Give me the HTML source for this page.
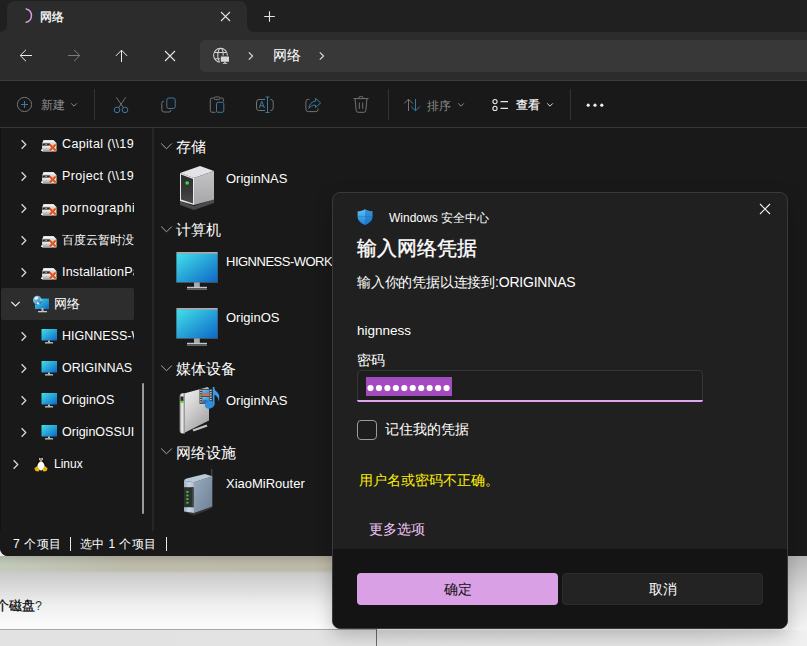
<!DOCTYPE html>
<html><head><meta charset="utf-8">
<style>
*{box-sizing:border-box;margin:0;padding:0}
html,body{width:807px;height:646px;overflow:hidden}
body{position:relative;font-family:"Liberation Sans",sans-serif;background:#e9e9e9;color:#fff}
.a{position:absolute}
.t{position:absolute;white-space:nowrap;line-height:1}
#bg{left:0;top:556px;width:807px;height:90px;background:linear-gradient(#c2c2c2,#c9c9c9 16px,#f0f0f0 50px,#fbfbfb 70px)}
#band{left:0;top:556px;width:788px;height:17px;background:linear-gradient(rgba(0,0,0,0.12),rgba(0,0,0,0) 9px,rgba(255,255,255,0) 14px,rgba(207,207,207,0.6) 17px),linear-gradient(90deg,#c3cabb,#bdbcab 120px,#bdb9a8 300px,#c0bdae)}
#bline{left:0;top:629px;width:377px;height:1px;background:#a8a8a8}
#below{left:0;top:630px;width:807px;height:16px;background:linear-gradient(90deg,#e2e2e2,#e4e4e4 700px,#f0f0f0 807px)}
#vline{left:376px;top:629px;width:1px;height:17px;background:#6a6a6a}
#rgrad{left:788px;top:556px;width:19px;height:74px;background:linear-gradient(#b5b5b5,#e0e0e0 40px,#f4f4f4 74px)}
#win{left:0;top:0;width:807px;height:556px;background:#191919;border-bottom-left-radius:8px;overflow:hidden}
#tabs{left:0;top:0;width:807px;height:32px;background:#2c2c2c}
#tab{left:7px;top:1px;width:240px;height:31px;background:#2c2c2c;border-radius:8px 8px 0 0}
#navbar{left:0;top:32px;width:807px;height:48px;background:#2c2c2c}
#addr{left:200px;top:40px;width:620px;height:32px;background:#383838;border-radius:5px}
#line1{left:0;top:80px;width:807px;height:1px;background:#3d3d3d}
#cmd{left:0;top:81px;width:807px;height:46px;background:#191919}
#line2{left:0;top:127px;width:807px;height:1px;background:#363636}
#navdiv{left:152px;top:128px;width:2px;height:403px;background:#262626}
#status{left:0;top:531px;width:807px;height:25px;background:#191919}
</style></head><body>
<svg width="0" height="0" style="position:absolute">
<defs>
<linearGradient id="scr" x1="0" y1="0" x2="1" y2="1"><stop offset="0" stop-color="#40e0ea"/><stop offset="1" stop-color="#0e66c6"/></linearGradient>
<linearGradient id="drv" x1="0" y1="0" x2="0" y2="1"><stop offset="0" stop-color="#f2f2f2"/><stop offset="1" stop-color="#9a9a9a"/></linearGradient>
<linearGradient id="glb" x1="0" y1="0" x2="1" y2="1"><stop offset="0" stop-color="#a8dcf5"/><stop offset="1" stop-color="#1f78b8"/></linearGradient>
<symbol id="ndrive" viewBox="0 0 18 14">
 <path d="M3.5 1.2H13.5L16.5 4V12.6H2.2V4Z" fill="#d8d8d8"/>
 <path d="M3.5 1.2H13.5L15.5 3.3H2.8Z" fill="#f4f4f4"/>
 <rect x="2.4" y="4.4" width="7.5" height="2.2" fill="#2a2a2a"/>
 <rect x="5.5" y="5" width="1.2" height="0.9" fill="#ddd"/>
 <rect x="2.4" y="7" width="9" height="5.6" fill="url(#drv)"/>
 <rect x="1" y="10.4" width="2" height="1.6" fill="#e8e8e8"/>
 <path d="M9.8 5.6L15.6 11.6M15.6 5.6L9.8 11.6" stroke="#fff" stroke-width="3.4" opacity="0.35"/>
 <path d="M9.8 5.6L15.6 11.6M15.6 5.6L9.8 11.6" stroke="#e4541d" stroke-width="2.2"/>
</symbol>
<symbol id="smon" viewBox="0 0 16 16">
 <rect x="0.5" y="1" width="15.5" height="11.5" fill="url(#scr)"/>
 <rect x="7" y="12.5" width="2" height="2" fill="#b8b8b8"/>
 <rect x="4" y="14.2" width="8" height="1.3" fill="#c8c8c8"/>
</symbol>
<symbol id="bmon" viewBox="0 0 42 38">
 <rect x="0" y="0" width="42" height="31" fill="#4a4a4a"/>
 <rect x="0.6" y="0.1" width="40.9" height="1.7" fill="#b6b8bf"/>
 <rect x="0.6" y="1.8" width="40.9" height="28.4" fill="url(#scr)"/>
 <rect x="18" y="30.4" width="5.8" height="4.8" fill="#a4abb0"/>
 <rect x="11" y="34.8" width="20" height="1.3" fill="#c4c8cc"/>
 <rect x="11" y="36.1" width="20" height="1.9" fill="#5e6368"/>
</symbol>
</defs></svg>
<div class="a" id="bg"></div>
<div class="a" id="band"></div>
<div class="a" id="bline"></div>
<div class="a" id="below"></div>
<div class="a" id="vline"></div>
<div class="a" id="rgrad"></div>
<div class="t" style="left:-4px;top:600px;font-size:12.5px;color:#000;-webkit-text-stroke:0.25px #000">个磁盘<span style="-webkit-text-stroke:0;color:#333">?</span></div>

<div class="a" id="win">
  <div class="a" id="tabs"></div>
  <div class="a" style="left:0;top:0;width:7px;height:32px;background:#202020;border-bottom-right-radius:7px"></div>
  <div class="a" style="left:247px;top:0;width:560px;height:32px;background:#202020;border-bottom-left-radius:8px"></div>
  <div class="a" style="left:7px;top:0;width:240px;height:10px;background:#202020"></div>
  <div class="a" id="tab"></div>
  <div class="a" id="navbar"></div>
  <div class="a" id="addr"></div>

  <svg class="a" style="left:17px;top:6px" width="20" height="20" viewBox="0 0 20 20"><path d="M9.2 2.9 A6.9 6.9 0 0 1 9.2 16.3" fill="none" stroke="#d99be6" stroke-width="1.5" stroke-linecap="round"/></svg>
  <div class="t" style="left:40px;top:11px;font-size:12.3px;color:#fff;-webkit-text-stroke:0.3px #fff">网络</div>
  <svg class="a" style="left:220px;top:11px" width="11" height="11" viewBox="0 0 11 11"><path d="M1 1L10 10M10 1L1 10" stroke="#e0e0e0" stroke-width="1.1"/></svg>
  <svg class="a" style="left:263px;top:10px" width="13" height="13" viewBox="0 0 13 13"><path d="M6.5 1.2V11.8M1.2 6.5H11.8" stroke="#e6e6e6" stroke-width="1.1"/></svg>
  <svg class="a" style="left:18px;top:48px" width="16" height="16" viewBox="0 0 16 16"><path d="M2.3 7.5H14M7.9 1.9L2.2 7.5L7.9 13.2" fill="none" stroke="#ececec" stroke-width="1"/></svg>
  <svg class="a" style="left:66px;top:48px" width="16" height="16" viewBox="0 0 16 16"><path d="M2 7.5H13.7M8.1 1.9L13.8 7.5L8.1 13.2" fill="none" stroke="#7c7c7c" stroke-width="1"/></svg>
  <svg class="a" style="left:114px;top:48px" width="16" height="16" viewBox="0 0 16 16"><path d="M7.5 2.2V14M1.9 7.9L7.5 2.2L13.1 7.9" fill="none" stroke="#ececec" stroke-width="1"/></svg>
  <svg class="a" style="left:164px;top:50px" width="12" height="12" viewBox="0 0 12 12"><path d="M1 1L11 11M11 1L1 11" stroke="#e6e6e6" stroke-width="1.1"/></svg>
  <svg class="a" style="left:212px;top:47px" width="20" height="20" viewBox="0 0 20 20"><g fill="none" stroke="#d4d4d4" stroke-width="1.05"><circle cx="8.5" cy="8.2" r="6.9"/><ellipse cx="8.5" cy="8.2" rx="2.7" ry="6.9"/><path d="M2.4 5.4H14.6M2.4 11.7H14.6"/></g><rect x="7.8" y="8.6" width="10.2" height="9" fill="#383838"/><rect x="8.8" y="9.6" width="8.2" height="5.1" rx="0.5" fill="#d8d8d8"/><rect x="12.3" y="14.5" width="1.4" height="1.6" fill="#d8d8d8"/><rect x="10.7" y="15.9" width="4.6" height="0.9" rx="0.4" fill="#d8d8d8"/></svg>
  <svg class="a" style="left:247px;top:51px" width="8" height="10" viewBox="0 0 8 10"><path d="M1.8 1.3L5.6 5L1.8 8.7" fill="none" stroke="#e0e0e0" stroke-width="1.1"/></svg>
  <div class="t" style="left:273px;top:48px;font-size:14px;color:#fff">网络</div>
  <svg class="a" style="left:318px;top:51px" width="8" height="10" viewBox="0 0 8 10"><path d="M1.8 1.3L5.6 5L1.8 8.7" fill="none" stroke="#e0e0e0" stroke-width="1.1"/></svg>
  <div class="a" id="line1"></div>
  <div class="a" id="cmd"></div>

  <svg class="a" style="left:16px;top:96px" width="17" height="17" viewBox="0 0 17 17"><circle cx="8.5" cy="8.5" r="7.1" fill="none" stroke="#767676" stroke-width="1"/><path d="M8.5 5V12M5 8.5H12" stroke="#3b7aa0" stroke-width="1.1"/></svg>
  <div class="t" style="left:41px;top:99px;font-size:12px;color:#8c8c8c">新建</div>
  <svg class="a" style="left:70px;top:101px" width="8" height="8" viewBox="0 0 8 8"><path d="M1.2 2.4L4 5.2L6.8 2.4" fill="none" stroke="#8c8c8c" stroke-width="1"/></svg>
  <div class="a" style="left:94px;top:89px;width:1px;height:31px;background:#333"></div>
  <svg class="a" style="left:112px;top:95px" width="18" height="19" viewBox="0 0 18 19"><g fill="none" stroke-width="1"><path d="M4.3 2.3L11.3 12.6M13.7 2.3L6.7 12.6" stroke="#727272"/><circle cx="5" cy="14.9" r="2.8" stroke="#3b7aa0"/><circle cx="13" cy="14.9" r="2.8" stroke="#3b7aa0"/></g></svg>
  <svg class="a" style="left:160px;top:96px" width="18" height="18" viewBox="0 0 18 18"><g fill="none" stroke-width="1"><path d="M4 5.2H3.8A2 2 0 0 0 1.8 7.2V13.8A2.2 2.2 0 0 0 4 16H9A2 2 0 0 0 11 14" stroke="#727272"/><rect x="6.8" y="2" width="8.4" height="10.5" rx="2" stroke="#3b7aa0"/></g></svg>
  <svg class="a" style="left:208px;top:95px" width="18" height="19" viewBox="0 0 18 19"><g fill="none" stroke-width="1"><path d="M5.5 3H4A1.8 1.8 0 0 0 2.3 4.8V15.5A1.8 1.8 0 0 0 4 17.3H7.5M12.5 3H14A1.6 1.6 0 0 1 15.5 4.6V6.5M6 3.3A1.3 1.3 0 0 1 7.3 2H10.7A1.3 1.3 0 0 1 12 3.3A1.3 1.3 0 0 1 10.7 4.6H7.3A1.3 1.3 0 0 1 6 3.3Z" stroke="#727272"/><rect x="8.5" y="7.3" width="7.3" height="10" rx="1.5" stroke="#3b7aa0"/></g></svg>
  <svg class="a" style="left:255px;top:95px" width="20" height="19" viewBox="0 0 20 19"><g fill="none" stroke-width="1"><path d="M10 4.5H4A2.5 2.5 0 0 0 1.5 7V13A2.5 2.5 0 0 0 4 15.5H10M15 4.5H15.7A2.5 2.5 0 0 1 18.2 7V13A2.5 2.5 0 0 1 15.7 15.5H15" stroke="#727272"/><path d="M4.2 13L6.8 6.3L9.4 13M5.1 10.8H8.5M12.5 2V17.5M10.5 2H14.5M10.5 17.5H14.5" stroke="#3b7aa0"/></g></svg>
  <svg class="a" style="left:304px;top:96px" width="18" height="18" viewBox="0 0 18 18"><g fill="none" stroke-width="1"><path d="M5.5 3.3H4.2A2.3 2.3 0 0 0 1.9 5.6V13.3A2.3 2.3 0 0 0 4.2 15.6H11.8A2.3 2.3 0 0 0 14.1 13.3V12.4" stroke="#727272"/><path d="M11.5 2.3L16.7 6.9L11.5 11.6V9.2C8.5 9 6.5 10.2 4.8 12.3C5.2 8.7 7.3 5.8 11.5 5.1Z" stroke="#3b7aa0" stroke-linejoin="round"/></g></svg>
  <svg class="a" style="left:352px;top:95px" width="18" height="19" viewBox="0 0 18 19"><g fill="none" stroke="#727272" stroke-width="1"><path d="M1.5 3.6H16.5M6.8 3.6V2.8A1.5 1.5 0 0 1 8.3 1.5H9.7A1.5 1.5 0 0 1 11.2 2.8V3.6M3 3.6L4.2 15.5A2 2 0 0 0 6.2 17.3H11.8A2 2 0 0 0 13.8 15.5L15 3.6M7.3 7.5V13.8M10.7 7.5V13.8"/></g></svg>
  <div class="a" style="left:388px;top:89px;width:1px;height:31px;background:#333"></div>
  <svg class="a" style="left:402px;top:97px" width="20" height="16" viewBox="0 0 20 16"><g fill="none" stroke-width="1"><path d="M6.5 14V2.2M2.2 6.5L6.5 2.2L10.8 6.5" stroke="#767676"/><path d="M13.5 2V13.8M9.2 9.5L13.5 13.8L17.8 9.5" stroke="#3b7aa0"/></g></svg>
  <div class="t" style="left:427px;top:100px;font-size:12px;color:#8c8c8c">排序</div>
  <svg class="a" style="left:457px;top:101px" width="8" height="8" viewBox="0 0 8 8"><path d="M1.2 2.4L4 5.2L6.8 2.4" fill="none" stroke="#8c8c8c" stroke-width="1"/></svg>
  <svg class="a" style="left:491px;top:97px" width="19" height="16" viewBox="0 0 19 16"><g fill="none" stroke="#e8e8e8" stroke-width="1.1"><circle cx="4" cy="4.6" r="2.1"/><circle cx="4" cy="11.4" r="2.1"/><path d="M9.5 4.6H17M9.5 11.4H17"/></g></svg>
  <div class="t" style="left:516px;top:99px;font-size:12px;color:#fff;-webkit-text-stroke:0.2px #fff">查看</div>
  <svg class="a" style="left:546px;top:101px" width="8" height="8" viewBox="0 0 8 8"><path d="M1.2 2.4L4 5.2L6.8 2.4" fill="none" stroke="#e0e0e0" stroke-width="1"/></svg>
  <div class="a" style="left:570px;top:89px;width:1px;height:31px;background:#333"></div>
  <svg class="a" style="left:585px;top:102px" width="20" height="6" viewBox="0 0 20 6"><g fill="#f0f0f0"><circle cx="3.2" cy="3.2" r="1.6"/><circle cx="10" cy="3.2" r="1.6"/><circle cx="16.8" cy="3.2" r="1.6"/></g></svg>
  <div class="a" id="line2"></div>
  <div class="a" style="left:0;top:128px;width:152px;height:403px;overflow:hidden">
  <div class="a" style="left:1px;top:160px;width:133px;height:32px;background:#2d2d2d;border-radius:2px"></div>
  <svg class="a" style="left:20px;top:11px" width="8" height="11" viewBox="0 0 8 11"><path d="M1.6 1.2L5.8 5.5L1.6 9.8" fill="none" stroke="#dadada" stroke-width="1.25"/></svg>
  <svg class="a" style="left:40px;top:11px" width="18" height="14"><use href="#ndrive"/></svg>
  <div class="t" style="left:62px;top:10px;font-size:12.5px;letter-spacing:0.35px;color:#fff;width:72px;overflow:hidden">Capital (\\192.168</div>
  <svg class="a" style="left:20px;top:43px" width="8" height="11" viewBox="0 0 8 11"><path d="M1.6 1.2L5.8 5.5L1.6 9.8" fill="none" stroke="#dadada" stroke-width="1.25"/></svg>
  <svg class="a" style="left:40px;top:43px" width="18" height="14"><use href="#ndrive"/></svg>
  <div class="t" style="left:62px;top:42px;font-size:12.5px;letter-spacing:0.35px;color:#fff;width:72px;overflow:hidden">Project (\\192.168</div>
  <svg class="a" style="left:20px;top:75px" width="8" height="11" viewBox="0 0 8 11"><path d="M1.6 1.2L5.8 5.5L1.6 9.8" fill="none" stroke="#dadada" stroke-width="1.25"/></svg>
  <svg class="a" style="left:40px;top:75px" width="18" height="14"><use href="#ndrive"/></svg>
  <div class="t" style="left:62px;top:74px;font-size:12.5px;letter-spacing:0.6px;color:#fff;width:72px;overflow:hidden">pornographic</div>
  <svg class="a" style="left:20px;top:107px" width="8" height="11" viewBox="0 0 8 11"><path d="M1.6 1.2L5.8 5.5L1.6 9.8" fill="none" stroke="#dadada" stroke-width="1.25"/></svg>
  <svg class="a" style="left:40px;top:107px" width="18" height="14"><use href="#ndrive"/></svg>
  <div class="t" style="left:62px;top:106px;font-size:12px;color:#fff;width:72px;overflow:hidden">百度云暂时没</div>
  <svg class="a" style="left:20px;top:139px" width="8" height="11" viewBox="0 0 8 11"><path d="M1.6 1.2L5.8 5.5L1.6 9.8" fill="none" stroke="#dadada" stroke-width="1.25"/></svg>
  <svg class="a" style="left:40px;top:139px" width="18" height="14"><use href="#ndrive"/></svg>
  <div class="t" style="left:62px;top:138px;font-size:12.5px;letter-spacing:0.2px;color:#fff;width:72px;overflow:hidden">InstallationPack</div>
  <svg class="a" style="left:10px;top:172px" width="11" height="8" viewBox="0 0 11 8"><path d="M1.3 1.8L5.5 6L9.7 1.8" fill="none" stroke="#f0f0f0" stroke-width="1.2"/></svg>
  <svg class="a" style="left:33px;top:164px" width="17" height="17" viewBox="0 0 17 17"><rect x="2" y="6.6" width="14" height="10.4" fill="url(#scr)"/><circle cx="4.4" cy="8.3" r="4.6" fill="#1d1d1d" opacity="0.5"/><circle cx="4.4" cy="8.2" r="4.4" fill="url(#glb)"/><path d="M1.5 6.2Q2.8 4.4 4.6 4.8L5.4 6.4L3.6 7.6L2 7.4Z" fill="#eaf6fb"/><path d="M3.2 10.2L5.6 10.6L6.6 12.4L4.6 12.4Z" fill="#eaf6fb"/><path d="M7.4 6.4L8.6 7.6L8.4 9.2L7.6 8.6Z" fill="#eaf6fb"/></svg>
  <svg class="a" style="left:38px;top:180px" width="9" height="5" viewBox="0 0 9 5"><rect x="3.5" y="0" width="2" height="3" fill="#b8b8b8"/><rect x="0" y="3" width="9" height="1.3" fill="#c8c8c8"/></svg>
  <div class="t" style="left:54px;top:170px;font-size:12.5px;color:#fff;width:80px;overflow:hidden">网络</div>
  <svg class="a" style="left:20px;top:203px" width="8" height="11" viewBox="0 0 8 11"><path d="M1.6 1.2L5.8 5.5L1.6 9.8" fill="none" stroke="#dadada" stroke-width="1.25"/></svg>
  <svg class="a" style="left:41px;top:200px" width="16" height="16"><use href="#smon"/></svg>
  <div class="t" style="left:62px;top:202px;font-size:12.5px;letter-spacing:0px;color:#fff;width:72px;overflow:hidden">HIGNNESS-WORK</div>
  <svg class="a" style="left:20px;top:235px" width="8" height="11" viewBox="0 0 8 11"><path d="M1.6 1.2L5.8 5.5L1.6 9.8" fill="none" stroke="#dadada" stroke-width="1.25"/></svg>
  <svg class="a" style="left:41px;top:232px" width="16" height="16"><use href="#smon"/></svg>
  <div class="t" style="left:62px;top:234px;font-size:12.5px;letter-spacing:0px;color:#fff;width:72px;overflow:hidden">ORIGINNAS</div>
  <svg class="a" style="left:20px;top:267px" width="8" height="11" viewBox="0 0 8 11"><path d="M1.6 1.2L5.8 5.5L1.6 9.8" fill="none" stroke="#dadada" stroke-width="1.25"/></svg>
  <svg class="a" style="left:41px;top:264px" width="16" height="16"><use href="#smon"/></svg>
  <div class="t" style="left:62px;top:266px;font-size:12.5px;letter-spacing:0.12px;color:#fff;width:72px;overflow:hidden">OriginOS</div>
  <svg class="a" style="left:20px;top:299px" width="8" height="11" viewBox="0 0 8 11"><path d="M1.6 1.2L5.8 5.5L1.6 9.8" fill="none" stroke="#dadada" stroke-width="1.25"/></svg>
  <svg class="a" style="left:41px;top:296px" width="16" height="16"><use href="#smon"/></svg>
  <div class="t" style="left:62px;top:298px;font-size:12.5px;letter-spacing:0px;color:#fff;width:72px;overflow:hidden">OriginOSSUITE</div>
  <svg class="a" style="left:12px;top:331px" width="8" height="11" viewBox="0 0 8 11"><path d="M1.6 1.2L5.8 5.5L1.6 9.8" fill="none" stroke="#dadada" stroke-width="1.25"/></svg>
  <svg class="a" style="left:34px;top:327px" width="14" height="17" viewBox="0 0 14 17"><path d="M7 1C5.4 1 4.7 2.2 4.7 4C4.7 5.3 4 6.2 3 7.6C1.9 9.2 1.5 10.8 1.9 13L12.1 13C12.5 10.8 12.1 9.2 11 7.6C10 6.2 9.3 5.3 9.3 4C9.3 2.2 8.6 1 7 1Z" fill="#0c0c0c"/><path d="M7 6.4C5 6.4 3.3 9 3.3 11.8C3.3 14 4.8 15.4 7 15.4C9.2 15.4 10.7 14 10.7 11.8C10.7 9 9 6.4 7 6.4Z" fill="#fff"/><ellipse cx="5.9" cy="3.9" rx="0.9" ry="1.1" fill="#d8d8d8"/><ellipse cx="8.1" cy="3.9" rx="0.9" ry="1.1" fill="#d8d8d8"/><path d="M5.2 5.5Q7 4.6 8.8 5.5L7 7Z" fill="#eab400"/><path d="M0.4 13.2L2.8 11.2L5.6 14.3L4.8 16.4L1.4 16Z" fill="#eab400"/><path d="M13.6 13.2L11.2 11.2L8.4 14.3L9.2 16.4L12.6 16Z" fill="#eab400"/></svg>
  <div class="t" style="left:54px;top:330px;font-size:12px;letter-spacing:0px;color:#fff;width:80px;overflow:hidden">Linux</div>
  <div class="a" style="left:142px;top:255px;width:2px;height:131px;background:#9a9a9a;border-radius:1px"></div>
  </div>
  <div class="a" id="navdiv"></div>
  <div class="a" style="left:0;top:128px;width:1px;height:403px;background:#121212"></div>
  <div class="a" id="status"></div>
  <svg class="a" style="left:160px;top:141px" width="13" height="10" viewBox="0 0 13 10"><path d="M1.2 2.5L6.5 7.8L11.8 2.5" fill="none" stroke="#a8a8a8" stroke-width="1"/></svg>
  <div class="t" style="left:176px;top:139px;font-size:15px;color:#fff">存储</div>
  <svg class="a" style="left:160px;top:224px" width="13" height="10" viewBox="0 0 13 10"><path d="M1.2 2.5L6.5 7.8L11.8 2.5" fill="none" stroke="#a8a8a8" stroke-width="1"/></svg>
  <div class="t" style="left:176px;top:222px;font-size:15px;color:#fff">计算机</div>
  <svg class="a" style="left:160px;top:363px" width="13" height="10" viewBox="0 0 13 10"><path d="M1.2 2.5L6.5 7.8L11.8 2.5" fill="none" stroke="#a8a8a8" stroke-width="1"/></svg>
  <div class="t" style="left:176px;top:361px;font-size:15px;color:#fff">媒体设备</div>
  <svg class="a" style="left:160px;top:446px" width="13" height="10" viewBox="0 0 13 10"><path d="M1.2 2.5L6.5 7.8L11.8 2.5" fill="none" stroke="#a8a8a8" stroke-width="1"/></svg>
  <div class="t" style="left:176px;top:445px;font-size:15px;color:#fff">网络设施</div>

  <svg class="a" style="left:176px;top:164px" width="42" height="50" viewBox="176 164 42 50">
   <defs><linearGradient id="nasr" x1="0" y1="0" x2="0" y2="1"><stop offset="0" stop-color="#c4c4c6"/><stop offset="1" stop-color="#a6a6a8"/></linearGradient>
   <linearGradient id="nasf" x1="0" y1="0" x2="0" y2="1"><stop offset="0" stop-color="#2c2c2c"/><stop offset="0.6" stop-color="#3a3a3a"/><stop offset="1" stop-color="#4a4a4a"/></linearGradient></defs>
   <path d="M180 201L194 206L214 199L214 203L194 210L180 205Z" fill="#4a4a4a"/>
   <path d="M180 173L200 166L214 171L194 178Z" fill="#e4e4e8"/>
   <path d="M194 178L214 171L214 199.5L194 205Z" fill="url(#nasr)"/>
   <path d="M180 173L194 178L194 205L180 201Z" fill="#e8e8e8"/>
   <path d="M181 174.5L193 179V203.5L181 199.5Z" fill="url(#nasf)"/>
   <circle cx="187.2" cy="183" r="1.8" fill="#2fe23a"/>
  </svg>
  <div class="t" style="left:226px;top:172px;font-size:13px;color:#fff">OriginNAS</div>

  <svg class="a" style="left:176px;top:252px" width="42" height="38"><use href="#bmon"/></svg>
  <div class="t" style="left:226px;top:255px;font-size:13px;letter-spacing:-0.5px;color:#fff">HIGNNESS-WORKSTATION</div>
  <svg class="a" style="left:176px;top:308px" width="42" height="38"><use href="#bmon"/></svg>
  <div class="t" style="left:226px;top:311px;font-size:13px;color:#fff">OriginOS</div>

  <svg class="a" style="left:176px;top:384px" width="46" height="52" viewBox="176 384 46 52">
   <defs><linearGradient id="mdside" x1="0" y1="0" x2="0.6" y2="1"><stop offset="0" stop-color="#f2f2f2"/><stop offset="0.5" stop-color="#d0d0d0"/><stop offset="1" stop-color="#a6a6a6"/></linearGradient>
   <linearGradient id="mdfront" x1="0" y1="0" x2="1" y2="0"><stop offset="0" stop-color="#7a7a7a"/><stop offset="0.45" stop-color="#f8f8f8"/><stop offset="1" stop-color="#8a8a8a"/></linearGradient>
   <linearGradient id="film" x1="0" y1="0" x2="1" y2="1"><stop offset="0" stop-color="#6cc6f0"/><stop offset="1" stop-color="#2a7cc8"/></linearGradient></defs>
   <path d="M192.5 429.5L206.5 424.5L207.5 426.5L193.5 431.5Z" fill="#c4c4c4"/>
   <path d="M184 393.5L207 387.2Q209 386.8 209 389V420.5L185 432.5Z" fill="url(#mdside)"/>
   <path d="M179.5 397Q179.5 393.5 183 393.2L185 393V433.5L183 433.5Q179.5 433.5 179.5 430Z" fill="url(#mdfront)"/>
   <rect x="180.5" y="396.5" width="3" height="5" fill="#2a2a2a"/>
   <rect x="180.5" y="400.8" width="3" height="2.2" fill="#5fe03a"/>
   <rect x="199.5" y="388.8" width="12.5" height="15" fill="#3a3a3a"/>
   <rect x="200.3" y="389.8" width="1.3" height="1.2" fill="#f0f0f0"/><rect x="210.2" y="389.8" width="1.3" height="1.2" fill="#f0f0f0"/><rect x="200.3" y="392.1" width="1.3" height="1.2" fill="#f0f0f0"/><rect x="210.2" y="392.1" width="1.3" height="1.2" fill="#f0f0f0"/><rect x="200.3" y="394.4" width="1.3" height="1.2" fill="#f0f0f0"/><rect x="210.2" y="394.4" width="1.3" height="1.2" fill="#f0f0f0"/><rect x="200.3" y="396.7" width="1.3" height="1.2" fill="#f0f0f0"/><rect x="210.2" y="396.7" width="1.3" height="1.2" fill="#f0f0f0"/><rect x="200.3" y="399.0" width="1.3" height="1.2" fill="#f0f0f0"/><rect x="210.2" y="399.0" width="1.3" height="1.2" fill="#f0f0f0"/><rect x="200.3" y="401.3" width="1.3" height="1.2" fill="#f0f0f0"/><rect x="210.2" y="401.3" width="1.3" height="1.2" fill="#f0f0f0"/>
   <rect x="202.3" y="389.8" width="7.2" height="6.2" fill="url(#film)"/>
   <rect x="202.3" y="396.8" width="7.2" height="6.2" fill="url(#film)"/>
   <path d="M202.3 394L205 392.5L207 394.5L209.5 393V396H202.3Z" fill="#e0683a"/>
   <path d="M202.3 401L205 399.5L209.5 401.5V403H202.3Z" fill="#3a6db8"/>
   <path d="M213.6 387V404" stroke="#3a9ae8" stroke-width="1.8"/>
   <path d="M213 387Q214.5 390 217.5 392.5Q220.5 395.5 218.5 401.5Q218.8 396.5 213.5 394Z" fill="#3a9ae8"/>
   <ellipse cx="209.8" cy="404.8" rx="5" ry="3.7" transform="rotate(-20 209.8 404.8)" fill="#2d8ee0"/>
  </svg>
  <div class="t" style="left:226px;top:394px;font-size:13px;color:#fff">OriginNAS</div>

  <svg class="a" style="left:180px;top:466px" width="36" height="52" viewBox="180 466 36 52">
   <defs><linearGradient id="rts" x1="0" y1="0" x2="1" y2="1"><stop offset="0" stop-color="#9aabbd"/><stop offset="1" stop-color="#6c8094"/></linearGradient>
   <linearGradient id="rtf" x1="0" y1="0" x2="1" y2="0"><stop offset="0" stop-color="#9fb0c0"/><stop offset="0.5" stop-color="#c8d6e2"/><stop offset="1" stop-color="#a9bac9"/></linearGradient></defs>
   <rect x="211.2" y="469" width="1.1" height="11" fill="#4e4e4e"/>
   <path d="M184 512L194 515.5L212.3 508.3V506.2L194 513Z" fill="#333"/>
   <path d="M194 482.3L212.3 476.3V506.5L194 513Z" fill="url(#rts)"/>
   <path d="M184 480.8Q184 479.3 186.5 478.5L204.8 474L212.3 476.3L194 482.3Z" fill="#b9c9d8"/>
   <path d="M184 480.8Q189 481.6 194 482.3V513Q189 512.3 184 511.5Z" fill="url(#rtf)"/>
   <rect x="184" y="487.2" width="9.6" height="20" fill="#2f2f2f"/>
   <rect x="192" y="487.2" width="1.6" height="20" fill="#444"/>
   <rect x="186.3" y="491" width="2.2" height="1.8" fill="#2fd23a"/>
   <rect x="186.3" y="494.6" width="2.2" height="1.8" fill="#2fd23a"/>
   <rect x="186.3" y="498.2" width="2.2" height="1.8" fill="#2fd23a"/>
   <rect x="186.3" y="501.8" width="2.2" height="1.8" fill="#2fd23a"/>
  </svg>
  <div class="t" style="left:226px;top:477px;font-size:13px;color:#fff">XiaoMiRouter</div>

  <div class="t" style="left:13px;top:538px;font-size:12px;letter-spacing:0.5px;color:#fff">7 个项目</div>
  <div class="a" style="left:70px;top:537px;width:1px;height:14px;background:#e8e8e8"></div>
  <div class="t" style="left:80px;top:538px;font-size:12px;letter-spacing:0.4px;color:#fff">选中 1 个项目</div>
  <div class="a" style="left:166px;top:537px;width:1px;height:14px;background:#e8e8e8"></div>

</div>


<div class="a" style="left:332px;top:192px;width:456px;height:437px;border-radius:8px;box-shadow:0 6px 18px rgba(0,0,0,0.22)"></div>
<div class="a" id="dlg" style="left:332px;top:192px;width:456px;height:437px;background:#202020;border:1px solid #3a3a3a;border-radius:8px;overflow:hidden">
  <div class="a" style="left:0;top:356px;width:456px;height:80px;background:#141414"></div>
</div>
<svg class="a" style="left:356px;top:208px" width="18" height="18" viewBox="0 0 18 18">
  <defs><linearGradient id="shl" x1="0" y1="0" x2="0" y2="1"><stop offset="0" stop-color="#5ec3f2"/><stop offset="1" stop-color="#1a7fd4"/></linearGradient></defs>
  <path d="M9 1.2C6.8 2.6 4.3 3.2 1.6 3.2V8.6C1.6 12.6 4.6 15.4 9 17C13.4 15.4 16.4 12.6 16.4 8.6V3.2C13.7 3.2 11.2 2.6 9 1.2Z" fill="url(#shl)"/>
  <path d="M9 1.2V17C13.4 15.4 16.4 12.6 16.4 8.6V3.2C13.7 3.2 11.2 2.6 9 1.2Z" fill="#1c6fc0" opacity="0.55"/>
  <path d="M1.6 8.6H16.4" stroke="#0f5aa8" stroke-width="0.6" opacity="0.5"/>
</svg>
<div class="t" style="left:389px;top:212px;font-size:12px;color:#fff">Windows 安全中心</div>
<svg class="a" style="left:759px;top:203px" width="12" height="12" viewBox="0 0 12 12"><path d="M1 1L11 11M11 1L1 11" stroke="#f0f0f0" stroke-width="1.1"/></svg>
<div class="t" style="left:357px;top:238px;font-size:20px;color:#fff;-webkit-text-stroke:0.35px #fff">输入网络凭据</div>
<div class="t" style="left:357px;top:275px;font-size:14px;color:#fff;letter-spacing:-0.2px">输入你的凭据以连接到:ORIGINNAS</div>
<div class="t" style="left:357px;top:324px;font-size:13.5px;color:#fff">hignness</div>
<div class="t" style="left:357px;top:353px;font-size:14px;color:#fff">密码</div>
<div class="a" style="left:357px;top:370px;width:346px;height:32px;background:#1e1e1e;border:1px solid #363636;border-radius:4px;overflow:hidden">
</div>
<div class="a" style="left:357px;top:400px;width:346px;height:2px;background:#e2a6ef;border-radius:0 0 4px 4px"></div>
<svg class="a" style="left:357px;top:370px" width="346" height="32" viewBox="357 370 346 32">
  <rect x="366" y="377" width="86" height="19" fill="#a44cbf"/>
  <circle cx="370.50" cy="388" r="3.1" fill="#fff"/><circle cx="378.95" cy="388" r="3.1" fill="#fff"/><circle cx="387.40" cy="388" r="3.1" fill="#fff"/><circle cx="395.85" cy="388" r="3.1" fill="#fff"/><circle cx="404.30" cy="388" r="3.1" fill="#fff"/><circle cx="412.75" cy="388" r="3.1" fill="#fff"/><circle cx="421.20" cy="388" r="3.1" fill="#fff"/><circle cx="429.65" cy="388" r="3.1" fill="#fff"/><circle cx="438.10" cy="388" r="3.1" fill="#fff"/><circle cx="446.55" cy="388" r="3.1" fill="#fff"/>
</svg>
<div class="a" style="left:357px;top:420px;width:20px;height:20px;border:1px solid #9c9c9c;border-radius:4px;background:#1d1d1d"></div>
<div class="t" style="left:385px;top:422px;font-size:14px;color:#fff">记住我的凭据</div>
<div class="t" style="left:359px;top:473px;font-size:14px;color:#fff000">用户名或密码不正确。</div>
<div class="t" style="left:369px;top:522px;font-size:14px;color:#f0c6f8">更多选项</div>
<div class="a" style="left:357px;top:573px;width:201px;height:32px;background:#daa0e6;border-radius:4px"></div>
<div class="t" style="left:357px;top:582px;width:201px;text-align:center;font-size:14px;color:#111">确定</div>
<div class="a" style="left:562px;top:573px;width:201px;height:32px;background:#232323;border:1px solid #2b2b2b;border-radius:4px"></div>
<div class="t" style="left:562px;top:582px;width:201px;text-align:center;font-size:14px;color:#fff">取消</div>
</body></html>
